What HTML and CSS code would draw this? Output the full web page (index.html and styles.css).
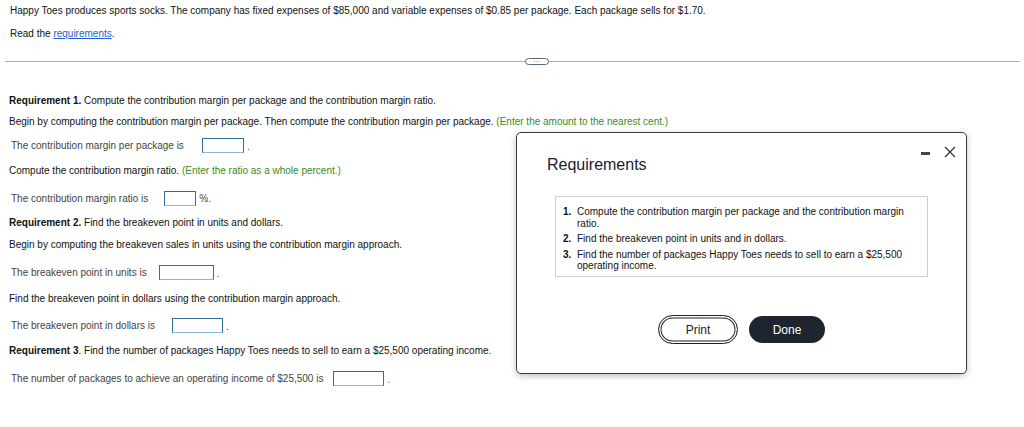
FILE: index.html
```html
<!DOCTYPE html>
<html>
<head>
<meta charset="utf-8">
<link rel="stylesheet" href="styles.css">
</head>
<body>
<div class="page">
  <p class="intro">Happy Toes produces sports socks. The company has fixed expenses of $85,000 and variable expenses of $0.85 per package. Each package sells for $1.70.</p>
  <p class="read">Read the <a href="#" class="link">requirements</a>.</p>
  <div class="divider"><span class="more"><span class="dots">&middot;&middot;&middot;</span></span></div>

  <div class="work">
    <p class="t first"><b>Requirement 1.</b> Compute the contribution margin per package and the contribution margin ratio.</p>
    <p class="t g9">Begin by computing the contribution margin per package. Then compute the contribution margin per package. <span class="hint">(Enter the amount to the nearest cent.)</span></p>
    <div class="row g9"><span class="lbl">The contribution margin per package is</span><span class="box w42 m18"></span><span class="after">.</span></div>
    <p class="t g12">Compute the contribution margin ratio. <span class="hint">(Enter the ratio as a whole percent.)</span></p>
    <div class="row g13"><span class="lbl">The contribution margin ratio is</span><span class="box w32 m16"></span><span class="after pct">%.</span></div>
    <p class="t g11"><b>Requirement 2.</b> Find the breakeven point in units and dollars.</p>
    <p class="t g10">Begin by computing the breakeven sales in units using the contribution margin approach.</p>
    <div class="row g13"><span class="lbl">The breakeven point in units is</span><span class="box w55 m12"></span><span class="after">.</span></div>
    <p class="t g13">Find the breakeven point in dollars using the contribution margin approach.</p>
    <div class="row g12"><span class="lbl">The breakeven point in dollars is</span><span class="box w51 m17"></span><span class="after">.</span></div>
    <p class="t g12"><b>Requirement 3</b>. Find the number of packages Happy Toes needs to sell to earn a $25,500 operating income.</p>
    <div class="row g13"><span class="lbl">The number of packages to achieve an operating income of $25,500 is</span><span class="box w51 m10"></span><span class="after">.</span></div>
  </div>
</div>

<div class="modal">
  <div class="modal-head">
    <h2 class="title">Requirements</h2>
    <div class="controls">
      <span class="minimize"></span>
      <svg class="close" width="12" height="12" viewBox="0 0 12 12"><path d="M1 1 L11 11 M11 1 L1 11" stroke="#333" stroke-width="1.3" fill="none"/></svg>
    </div>
  </div>
  <div class="reqbox">
    <ol class="reqlist">
      <li><span class="num">1.</span><span>Compute the contribution margin per package and the contribution margin ratio.</span></li>
      <li><span class="num">2.</span><span>Find the breakeven point in units and in dollars.</span></li>
      <li><span class="num">3.</span><span>Find the number of packages Happy Toes needs to sell to earn a $25,500 operating income.</span></li>
    </ol>
  </div>
  <div class="buttons">
    <button class="btn print">Print</button>
    <button class="btn done">Done</button>
  </div>
</div>
</body>
</html>
```

FILE: styles.css
```css
html, body {
  margin: 0;
  padding: 0;
  background: #fff;
}
body {
  font-family: "Liberation Sans", Arial, sans-serif;
  font-size: 10px;
  color: #111;
  width: 1024px;
  height: 427px;
  overflow: hidden;
  position: relative;
}
p { margin: 0; }
.page {
  padding: 5px 0 0 0;
}
.intro, .read {
  line-height: 12px;
  padding-left: 10px;
}
.read { margin-top: 11px; }
.link { color: #1a5fd6; text-decoration: underline; }
.divider {
  margin: 17px 4px 0 5px;
  height: 8px;
  position: relative;
  display: flex;
  align-items: center;
  justify-content: center;
}
.divider::before {
  content: "";
  position: absolute;
  left: 0; right: 0; top: 4px;
  height: 1px;
  background: #b9a9b1;
}
.more {
  position: relative;
  width: 22px;
  height: 5px;
  border: 1px solid #5a6a7a;
  border-radius: 4px;
  background: #fff;
  display: flex;
  align-items: center;
  justify-content: center;
  margin-left: 48px;
}
.dots {
  font-size: 7px;
  line-height: 5px;
  color: #445;
}
.work {
  padding-left: 9px;
}
.t {
  line-height: 12px;
}
.first { margin-top: 30px; }
.g9 { margin-top: 9px; }
.g10 { margin-top: 10px; }
.g11 { margin-top: 11px; }
.g12 { margin-top: 12px; }
.g13 { margin-top: 13px; }
.hint { color: #3a8a23; }
.row {
  display: flex;
  align-items: center;
  height: 16px;
  padding-left: 2px;
  color: #444;
}
.box {
  display: inline-block;
  height: 13px;
  border: 1px solid #2f6f95;
  border-bottom-color: #8fb6cc;
  background: #fff;
}
.w32 { width: 30px; }
.w42 { width: 40px; }
.w51 { width: 49px; }
.w55 { width: 53px; }
.m10 { margin-left: 10px; }
.m12 { margin-left: 12px; }
.m16 { margin-left: 16px; }
.m17 { margin-left: 17px; }
.m18 { margin-left: 18px; }
.after { margin-left: 3px; padding-top: 2px; }
.pct { margin-left: 3px; padding-top: 0; }

.modal {
  position: absolute;
  left: 516px;
  top: 132px;
  width: 449px;
  height: 240px;
  border: 1.5px solid #3a3a3a;
  border-radius: 5px;
  background: #fff;
  box-shadow: 0 2px 6px rgba(0,0,0,0.25);
  display: flex;
  flex-direction: column;
}
.modal-head {
  display: flex;
  justify-content: space-between;
  align-items: flex-start;
  padding: 0 10px 0 30px;
}
.title {
  margin: 23px 0 0 0;
  font-family: "Liberation Sans", Arial, sans-serif;
  font-weight: normal;
  font-size: 16px;
  line-height: 18px;
  color: #1b2030;
}
.controls {
  display: flex;
  align-items: center;
  gap: 14px;
  margin-top: 13px;
}
.minimize {
  display: inline-block;
  width: 9px;
  height: 3px;
  background: #444;
  margin-top: 2px;
}
.reqbox {
  margin: 22px 0 0 38px;
  width: 371px;
  height: 79px;
  border: 1px solid #cfcfcf;
}
.reqlist {
  list-style: none;
  margin: 0;
  padding: 9px 20px 0 7px;
  font-size: 10px;
  line-height: 11.5px;
  color: #111;
}
.reqlist li {
  display: flex;
  margin-bottom: 4px;
}
.num {
  font-weight: bold;
  width: 14px;
  flex: none;
}
.buttons {
  display: flex;
  justify-content: center;
  gap: 11px;
  margin-top: 38px;
  padding-left: 0;
}
.btn {
  font-family: "Liberation Sans", Arial, sans-serif;
  font-size: 12px;
  height: 29px;
  border-radius: 15px;
  cursor: pointer;
}
.print {
  width: 80px;
  background: #fff;
  color: #1b2030;
  border: 1.5px solid #1b2030;
  box-shadow: inset 0 0 0 1.5px #fff, inset 0 0 0 2.5px #1b2030;
}
.done {
  width: 76px;
  height: 27px;
  margin-top: 1px;
  background: #1f2431;
  color: #fff;
  border: none;
}
```
